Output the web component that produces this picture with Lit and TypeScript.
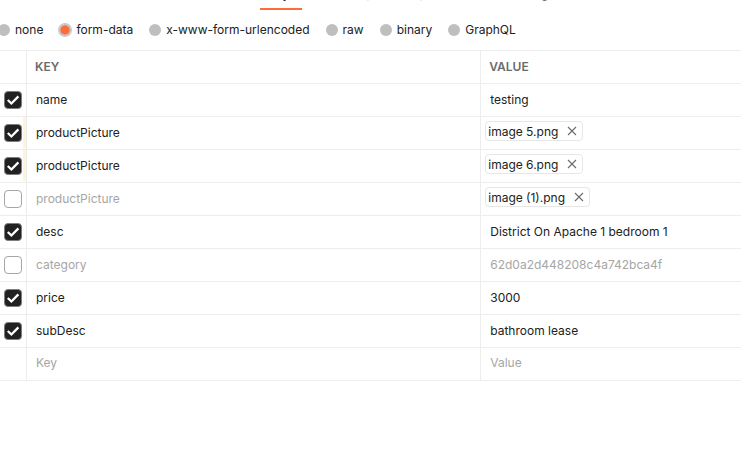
import { LitElement, html, css, svg, nothing } from "lit";
import { customElement, state } from "lit/decorators.js";
import { classMap } from "lit/directives/class-map.js";

interface Row {
  key: string;
  value: string;
  on: boolean;
  file?: boolean;
  flagged?: boolean;
}

const MODES = ["none", "form-data", "x-www-form-urlencoded", "raw", "binary", "GraphQL"];

const cross = svg`<path d="M1 1l8 8M9 1l-8 8" fill="none" stroke="#6b6b6b" stroke-width="1.1"/>`;

@customElement("app-root")
export class AppRoot extends LitElement {
  @state() private mode = "form-data";
  @state() private rows: Row[] = [
    { key: "name", value: "testing", on: true },
    { key: "productPicture", value: "image 5.png", on: true, file: true, flagged: true },
    { key: "productPicture", value: "image 6.png", on: true, file: true, flagged: true },
    { key: "productPicture", value: "image (1).png", on: false, file: true },
    { key: "desc", value: "District On Apache 1 bedroom 1", on: true },
    { key: "category", value: "62d0a2d448208c4a742bca4f", on: false },
    { key: "price", value: "3000", on: true },
    { key: "subDesc", value: "bathroom lease", on: true },
  ];

  static styles = css`
    :host {
      display: block;
      min-height: 100vh;
      background: #fff;
      color: #212121;
      font: 12px/16px Inter, sans-serif;
      overflow: hidden;
    }
    .tabs {
      display: flex;
      gap: 24px;
      height: 10px;
      padding-left: 260px;
      align-items: flex-end;
      overflow: hidden;
    }
    .tab {
      flex: none;
      display: flex;
      align-items: center;
      gap: 6px;
      padding-bottom: 6px;
      border-bottom: 2px solid transparent;
      color: #6b6b6b;
      text-decoration: none;
    }
    .tab.current {
      border-color: #ff6c37;
      color: #212121;
    }
    .dot {
      width: 7px;
      height: 7px;
      border-radius: 50%;
      background: #0cbb52;
    }
    .modes {
      display: flex;
      height: 40px;
      align-items: center;
      gap: 16px;
    }
    .mode {
      display: flex;
      align-items: center;
      gap: 5px;
      white-space: nowrap;
    }
    .mode:first-child {
      margin-left: -2px;
    }
    .radio {
      appearance: none;
      flex: none;
      width: 12px;
      height: 12px;
      margin: 0;
      border-radius: 50%;
      background: #bfbfbf;
    }
    .radio:checked {
      background: radial-gradient(circle, #ff6c37 4px, #bfbfbf 5px);
      box-shadow: 0 0 0 1px #c8c8c8;
    }
    table {
      width: 100%;
      table-layout: fixed;
      border-collapse: separate;
      border-spacing: 0;
      border-top: 1px solid #ededed;
    }
    .col-check {
      width: 27px;
    }
    .col-key {
      width: 61.3%;
    }
    th,
    td {
      box-sizing: border-box;
      height: 33px;
      padding: 0 9px;
      border-bottom: 1px solid #ededed;
      text-align: left;
      vertical-align: middle;
    }
    th {
      padding: 0 8px;
      color: #6b6b6b;
      font-weight: 600;
    }
    th:not(:last-child),
    td:not(:last-child) {
      border-right: 1px solid #ededed;
    }
    td.pick {
      padding: 0 0 0 4px;
    }
    td.flagged {
      background: linear-gradient(#fff5d6, #fff5d6) right top / 3px 31px no-repeat;
    }
    td.file {
      padding: 0 4px;
    }
    .off {
      color: #a6a6a6;
    }
    .box {
      appearance: none;
      display: block;
      box-sizing: border-box;
      width: 18px;
      height: 18px;
      margin: 0;
      border: 1px solid #a6a6a6;
      border-radius: 4px;
      background: #fff;
    }
    .box:checked {
      border-color: #7d7d7d;
      background: #212121;
    }
    .pickbox {
      display: grid;
      width: 18px;
      height: 18px;
    }
    .pickbox > * {
      grid-area: 1 / 1;
    }
    .tick {
      pointer-events: none;
      z-index: 1;
    }
    .chip {
      display: flex;
      box-sizing: border-box;
      width: max-content;
      height: 20px;
      align-items: center;
      gap: 8px;
      margin-bottom: 4px;
      padding: 2px 4px 0 2px;
      border: 1px solid #e6e6e6;
      border-radius: 4px;
    }
    .remove {
      display: grid;
      width: 12px;
      height: 16px;
      padding: 0 0 2px;
      border: 0;
      background: none;
      place-items: center;
    }
    .entry {
      box-sizing: border-box;
      display: block;
      width: 100%;
      height: 16px;
      margin: 0 0 2px;
      padding: 0;
      border: 0;
      outline: 0;
      background: none;
      color: inherit;
      font: inherit;
    }
    .entry::placeholder {
      color: #a6a6a6;
      opacity: 1;
    }
  `;

  private toggle(i: number) {
    this.rows = this.rows.map((r, n) => (n === i ? { ...r, on: !r.on } : r));
  }

  private clear(i: number) {
    this.rows = this.rows.filter((_, n) => n !== i);
  }

  private row(r: Row, i: number) {
    return html`<tr>
      <td class=${classMap({ pick: true, flagged: !!r.flagged })}>
        <div class="pickbox">
          <input class="box" type="checkbox" aria-label="Include ${r.key}" .checked=${r.on} @change=${() => this.toggle(i)} />
          ${r.on
            ? html`<svg class="tick" width="18" height="18" viewBox="0 0 18 18" aria-hidden="true">
                <path d="M3.8 9l3.6 3.5L14.4 5.4" fill="none" stroke="#fff" stroke-width="2.3" />
              </svg>`
            : nothing}
        </div>
      </td>
      <td class=${classMap({ off: !r.on })}>${r.key}</td>
      <td class=${classMap({ file: !!r.file, off: !r.on && !r.file })}>
        ${r.file
          ? html`<div class="chip">
              <span>${r.value}</span>
              <button class="remove" aria-label="Remove ${r.value}" @click=${() => this.clear(i)}>
                <svg width="10" height="10" viewBox="0 0 10 10">${cross}</svg>
              </button>
            </div>`
          : r.value}
      </td>
    </tr>`;
  }

  render() {
    return html`
      <nav class="tabs">
        <a class="tab current" href="#body">Body<span class="dot"></span></a>
        <a class="tab" href="#pre-request">Pre-request Script</a>
        <a class="tab" href="#tests">Tests</a>
        <a class="tab" href="#settings">Settings</a>
      </nav>
      <div class="modes" role="radiogroup" aria-label="Body type">
        ${MODES.map(
          (m) => html`<label class="mode">
            <input class="radio" type="radio" name="mode" .checked=${m === this.mode} @change=${() => (this.mode = m)} />
            ${m}
          </label>`
        )}
      </div>
      <table>
        <colgroup>
          <col class="col-check" />
          <col class="col-key" />
          <col />
        </colgroup>
        <thead>
          <tr>
            <th></th>
            <th>KEY</th>
            <th>VALUE</th>
          </tr>
        </thead>
        <tbody>
          ${this.rows.map((r, i) => this.row(r, i))}
          <tr>
            <td class="pick"></td>
            <td><input class="entry" aria-label="Key" placeholder="Key" /></td>
            <td><input class="entry" aria-label="Value" placeholder="Value" /></td>
          </tr>
        </tbody>
      </table>
    `;
  }
}
